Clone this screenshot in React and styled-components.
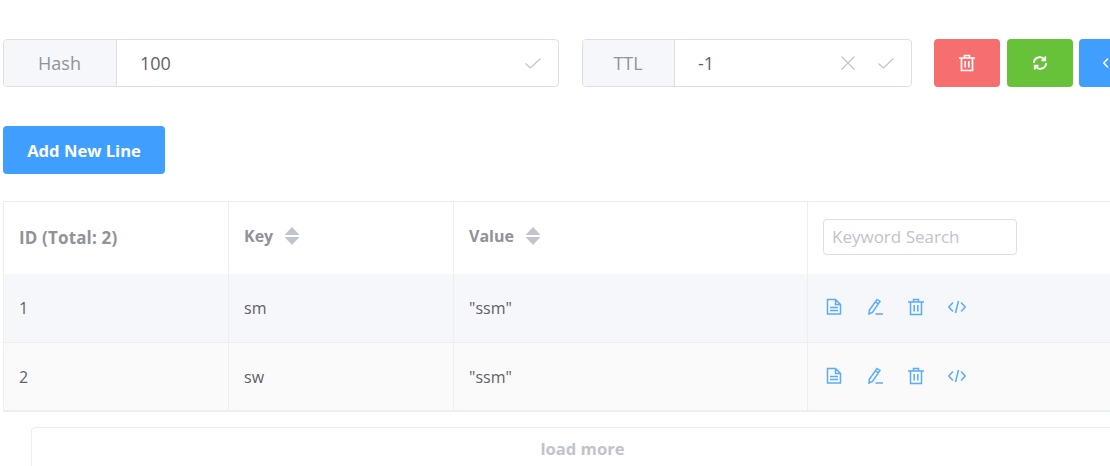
import React from "react";
import styled, { createGlobalStyle } from "styled-components";

const GlobalStyle = createGlobalStyle`
  html, body {
    margin: 0;
    padding: 0;
    background: #fff;
    overflow: hidden;
    font-family: "Open Sans", "Noto Sans", "Liberation Sans", sans-serif;
  }
`;

const Page = styled.div`
  width: 1110px;
  height: 466px;
  overflow: hidden;
  padding: 39px 0 0 3px;
  box-sizing: border-box;
`;

const TopRow = styled.div`
  display: flex;
  width: 1200px;
  height: 48px;
`;

const InputGroup = styled.div`
  display: flex;
  box-sizing: border-box;
  width: ${(p) => p.$width}px;
  height: 48px;
  margin-right: ${(p) => p.$gap}px;
  border: 1px solid #dcdfe6;
  border-radius: 4px;
  overflow: hidden;
`;

const Prepend = styled.div`
  box-sizing: border-box;
  width: ${(p) => p.$width}px;
  flex: none;
  display: flex;
  align-items: center;
  justify-content: center;
  padding-right: 1px;
  background: #f5f7fa;
  border-right: 1px solid #dcdfe6;
  color: #909399;
  font-size: 18px;
`;

const InputValue = styled.div`
  flex: 1;
  padding-left: 23px;
  display: flex;
  align-items: center;
  color: #606266;
  font-size: 18px;
`;

const Suffix = styled.div`
  display: flex;
  align-items: center;
  gap: 20px;
  padding-right: 16px;
  color: #c0c4cc;
`;

const ActionButton = styled.button`
  flex: none;
  width: 66px;
  height: 48px;
  padding: 0;
  margin-right: ${(p) => p.$gap}px;
  border: none;
  border-radius: 4px;
  background: ${(p) => p.$bg};
  color: #fff;
  display: flex;
  align-items: center;
  justify-content: center;
`;

const AddButton = styled.button`
  display: block;
  width: 162px;
  height: 48px;
  margin: 39px 0 27px;
  padding: 1px 0 0;
  border: none;
  border-radius: 4px;
  background: #409eff;
  color: #fff;
  font: 700 16.6px "Open Sans", sans-serif;
`;

const Table = styled.div`
  width: 1300px;
  border-top: 1px solid #ebeef5;
  border-left: 1px solid #ebeef5;
  border-bottom: 2px solid #ebeef5;
  color: #606266;
  font-size: 16px;
`;

const Row = styled.div`
  display: grid;
  grid-template-columns: 225px 225px 354px 1fr;
  height: ${(p) => p.$height}px;
  background: ${(p) => p.$bg};
  border-bottom: ${(p) => (p.$divider ? "1px solid #ebeef5" : "none")};
  box-sizing: border-box;
`;

const Cell = styled.div`
  display: flex;
  align-items: center;
  padding-left: 15px;
  border-right: 1px solid #ebeef5;
  box-sizing: border-box;
`;

const HeadCell = styled(Cell)`
  padding-bottom: ${(p) => p.$lift || 0}px;
`;

const HeadLabel = styled.span`
  color: #909399;
  font-weight: 700;
  font-size: ${(p) => p.$size || 16}px;
  letter-spacing: ${(p) => p.$spacing || 0}px;
`;

const SortWrap = styled.span`
  display: inline-flex;
  margin-left: 11px;
  color: #c0c4cc;
`;

const SearchBox = styled.div`
  box-sizing: border-box;
  width: 194px;
  height: 36px;
  padding: 0 0 2px 8px;
  display: flex;
  align-items: center;
  border: 1px solid #dcdfe6;
  border-radius: 4px;
  color: #c0c4cc;
  font-size: 17px;
`;

const IconRow = styled.div`
  display: flex;
  gap: 23px;
  color: #409eff;
  opacity: 0.85;
  padding: 0 0 2px 2px;
`;

const LoadMore = styled.div`
  box-sizing: border-box;
  width: 1102px;
  height: 48px;
  margin: 15px 0 0 28px;
  padding: 0 0 6px 1px;
  display: flex;
  align-items: center;
  justify-content: center;
  border: 1px solid #ebeef5;
  border-radius: 4px;
  color: #c0c4cc;
  font-weight: 700;
  font-size: 16.6px;
`;

const Svg = ({ size = 18, weight = 1.4, children }) => (
  <svg width={size} height={size} viewBox="0 0 18 18" fill="none" stroke="currentColor" strokeWidth={weight}>
    {children}
  </svg>
);

const CheckIcon = () => (
  <Svg weight={1.2}>
    <path d="M1.5 9.5 L6.5 14 L16.5 4.5" />
  </Svg>
);
const CloseIcon = () => (
  <Svg weight={1.2}>
    <path d="M2.5 2.5 L15.5 15.5 M15.5 2.5 L2.5 15.5" />
  </Svg>
);
const TrashIcon = ({ weight }) => (
  <Svg weight={weight}>
    <path d="M1 4 H17 M6.5 4 V1.5 H11.5 V4 M3.5 4 V16.5 H14.5 V4 M7.2 7 V13.5 M10.8 7 V13.5" />
  </Svg>
);
const RefreshIcon = () => (
  <Svg weight={1.9}>
    <path d="M2.8 9 A6 6 0 0 1 13.5 5.5 M15.2 9 A6 6 0 0 1 4.5 12.5" />
    <path d="M14.2 2.5 V6.3 H10.5 M3.8 15.5 V11.7 H7.5" />
  </Svg>
);
const DocIcon = () => (
  <Svg weight={1.5}>
    <path d="M2.5 1.5 H10.5 L15.5 6.5 V16 H2.5 Z M10.5 1.5 V6.5 H15.5 M5 9.5 H13 M5 12.5 H13" />
  </Svg>
);
const EditIcon = () => (
  <Svg weight={1.5}>
    <path d="M11 1.5 L14 3.5 L6.5 14.5 L3 16 L3.3 12.2 Z M9.4 3.8 L12.4 5.9 M9.5 16 H17" />
  </Svg>
);
const CodeIcon = () => (
  <Svg weight={1.5}>
    <path d="M5 4.5 L0.8 9 L5 13.5 M13 4.5 L17.2 9 L13 13.5 M10.5 3 L7.5 15" />
  </Svg>
);
const SortIcon = () => (
  <svg width="16" height="20" viewBox="0 0 16 20" fill="currentColor">
    <path d="M8 1 L15.5 9 H0.5 Z M0.5 11 H15.5 L8 19 Z" />
  </svg>
);

const RowActions = () => (
  <IconRow>
    <DocIcon />
    <EditIcon />
    <TrashIcon weight={1.5} />
    <CodeIcon />
  </IconRow>
);

const rows = [
  { id: 1, key: "sm", value: '"ssm"', bg: "#f5f7fa", divider: true },
  { id: 2, key: "sw", value: '"ssm"', bg: "#fafafa" },
];

export default function App() {
  return (
    <Page>
      <GlobalStyle />
      <TopRow>
        <InputGroup $width={556} $gap={23}>
          <Prepend $width={113}>Hash</Prepend>
          <InputValue>100</InputValue>
          <Suffix>
            <CheckIcon />
          </Suffix>
        </InputGroup>
        <InputGroup $width={330} $gap={22}>
          <Prepend $width={92}>TTL</Prepend>
          <InputValue>-1</InputValue>
          <Suffix>
            <CloseIcon />
            <CheckIcon />
          </Suffix>
        </InputGroup>
        <ActionButton $bg="#f76e6e" $gap={7}>
          <TrashIcon weight={1.7} />
        </ActionButton>
        <ActionButton $bg="#67c23a" $gap={6}>
          <RefreshIcon />
        </ActionButton>
        <ActionButton $bg="#409eff" $gap={0}>
          <CodeIcon />
        </ActionButton>
      </TopRow>
      <AddButton>Add New Line</AddButton>
      <Table>
        <Row $height={72} $bg="#fff">
          <HeadCell $lift={2}>
            <HeadLabel $size={17} $spacing={0.15}>ID (Total: 2)</HeadLabel>
          </HeadCell>
          <HeadCell $lift={4}>
            <HeadLabel>Key</HeadLabel>
            <SortWrap>
              <SortIcon />
            </SortWrap>
          </HeadCell>
          <HeadCell $lift={4}>
            <HeadLabel>Value</HeadLabel>
            <SortWrap>
              <SortIcon />
            </SortWrap>
          </HeadCell>
          <HeadCell $lift={2}>
            <SearchBox>Keyword Search</SearchBox>
          </HeadCell>
        </Row>
        {rows.map((r) => (
          <Row key={r.id} $height={r.divider ? 69 : 67} $bg={r.bg} $divider={r.divider}>
            <Cell>{r.id}</Cell>
            <Cell>{r.key}</Cell>
            <Cell>{r.value}</Cell>
            <Cell>
              <RowActions />
            </Cell>
          </Row>
        ))}
      </Table>
      <LoadMore>load more</LoadMore>
    </Page>
  );
}
